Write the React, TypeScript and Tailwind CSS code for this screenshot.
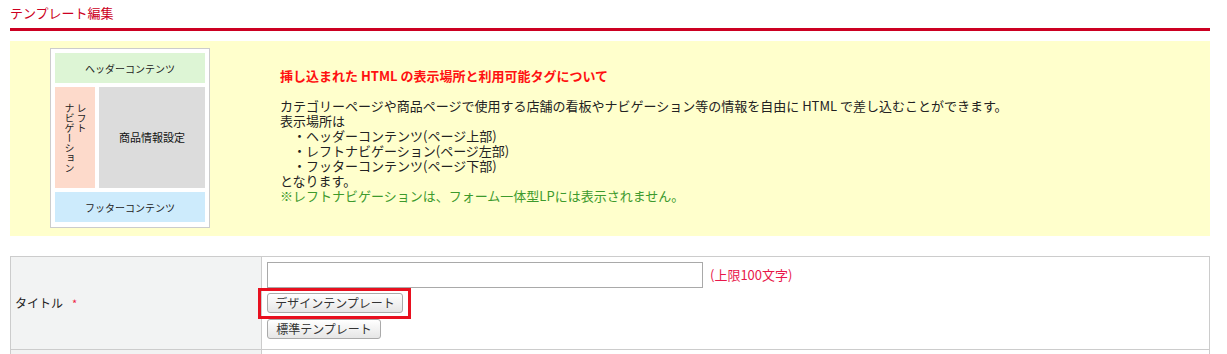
import React from "react";

const font = { fontFamily: '"Noto Sans CJK JP", "Noto Sans", sans-serif' };

export default function App() {
  return (
    <div className="w-[1227px] h-[354px] overflow-hidden bg-white px-[10px] pr-[17px] text-[#222]" style={font}>
      <div className="pt-[4px] h-[31px] border-b-[3px] border-[#cc0022]">
        <h1 className="text-[13px] leading-[18px] text-[#cc0022] font-normal">テンプレート編集</h1>
      </div>
      <div className="mt-[10px] h-[195px] bg-[#ffffcc] flex">
        <div className="ml-[40px] mt-[7px] w-[160px] h-[180px] border border-[#cccccc] bg-white px-[4px] pt-[4px] flex flex-col gap-[4px]">
          <div className="h-[30px] bg-[#ddf5d5] flex items-center justify-center text-[10px] text-[#222]">ヘッダーコンテンツ</div>
          <div className="h-[101px] flex gap-[4px]">
            <div className="w-[40px] bg-[#fddacb] flex justify-center items-center">
              <div className="text-[10px] leading-[12px] text-[#222] [writing-mode:vertical-rl]">
                レフト<br />ナビゲーション
              </div>
            </div>
            <div className="flex-1 bg-[#dcdcdc] flex items-center justify-center text-[11px] text-[#111]">商品情報設定</div>
          </div>
          <div className="h-[30px] bg-[#cdebfc] flex items-center justify-center text-[10px] text-[#222]">フッターコンテンツ</div>
        </div>
        <div className="ml-[70px] pt-[27px] text-[13px] leading-[15px]">
          <p className="font-bold text-[#ff1111]">挿し込まれた HTML の表示場所と利用可能タグについて</p>
          <p className="mt-[15px]">カテゴリーページや商品ページで使用する店舗の看板やナビゲーション等の情報を自由に HTML で差し込むことができます。</p>
          <p>表示場所は</p>
          <p className="pl-[13px]">・ヘッダーコンテンツ(ページ上部)</p>
          <p className="pl-[13px]">・レフトナビゲーション(ページ左部)</p>
          <p className="pl-[13px]">・フッターコンテンツ(ページ下部)</p>
          <p>となります。</p>
          <p className="text-[#3d9a2c]">※レフトナビゲーションは、フォーム一体型LPには表示されません。</p>
        </div>
      </div>
      <div className="mt-[20px] border border-[#cccccc]">
        <div className="flex h-[93px] border-b border-[#cccccc]">
          <div className="w-[251px] bg-[#f2f3f3] border-r border-[#cccccc] flex items-center pl-[4px] text-[12px]">
            タイトル<span className="ml-[9px] text-[#ee2244] text-[11px]">*</span>
          </div>
          <div className="relative flex-1 pl-[5px] pt-[5px] flex flex-col items-start">
            <div className="flex items-center">
              <input className="w-[436px] h-[26px] border border-[#a9a9a9] bg-white outline-none" />
              <span className="ml-[7px] text-[13px] text-[#e8174a]">(上限100文字)</span>
            </div>
            <button className="mt-[5px] w-[136px] h-[20px] rounded-[3px] border border-[#aaaaaa] bg-gradient-to-b from-[#ffffff] to-[#e6e6e6] text-[12px] leading-[18px] text-[#333]">デザインテンプレート</button>
            <button className="mt-[6px] w-[114px] h-[20px] rounded-[3px] border border-[#aaaaaa] bg-gradient-to-b from-[#ffffff] to-[#e6e6e6] text-[12px] leading-[18px] text-[#333]">標準テンプレート</button>
            <div className="absolute left-[-4px] top-[31px] w-[153px] h-[31px] border-[3px] border-[#e8101f] pointer-events-none" />
          </div>
        </div>
        <div className="flex h-[20px]">
          <div className="w-[251px] bg-[#f2f3f3] border-r border-[#cccccc]" />
          <div className="flex-1" />
        </div>
      </div>
    </div>
  );
}
